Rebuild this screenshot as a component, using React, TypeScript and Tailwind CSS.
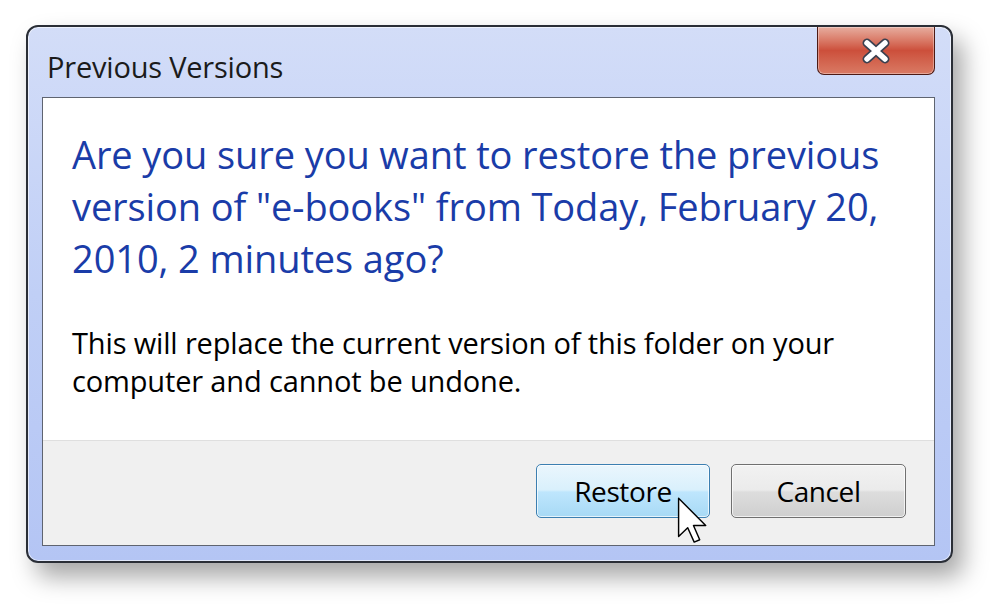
import React from "react";

const font = { fontFamily: '"Open Sans", "Noto Sans", sans-serif' };

function CloseGlyph() {
  return (
    <svg width="30" height="26" viewBox="0 0 30 26">
      <path d="M6 5 L24 21 M24 5 L6 21" stroke="#3b4150" strokeWidth="9" strokeLinecap="round" />
      <path d="M6 5 L24 21 M24 5 L6 21" stroke="#ffffff" strokeWidth="5.5" strokeLinecap="round" />
    </svg>
  );
}

function Cursor() {
  return (
    <svg width="32" height="48" viewBox="0 0 13 20" className="absolute left-[677px] top-[497px]">
      <path
        d="M0.5 0.5 L0.5 16.5 L4.3 12.8 L7 18.8 L9.3 17.8 L6.7 11.9 L11.8 11.9 Z"
        fill="#ffffff"
        stroke="#000000"
        strokeWidth="0.6"
        strokeLinejoin="round"
      />
    </svg>
  );
}

export default function App() {
  return (
    <div className="relative h-[609px] w-[1000px] overflow-hidden bg-white" style={font}>
      {/* Window */}
      <div className="ml-[26px] mt-[25px] flex h-[538px] w-[927px] flex-col rounded-[12px] border-2 border-[#2a2e36] bg-gradient-to-b from-[#d3ddf8] via-[#c0cff6] to-[#b4c5f4] shadow-[10px_14px_24px_rgba(0,0,0,0.35),inset_0_0_0_1px_rgba(255,255,255,0.6)]">
        {/* Title bar */}
        <div className="flex h-[70px] items-start justify-between pl-[19px] pr-[16px]">
          <div className="mt-[18px] text-[29px] tracking-[-0.2px] text-[#1b1b1b]">Previous Versions</div>
          <div className="flex h-[48px] w-[118px] items-center justify-center rounded-b-[7px] border border-t-0 border-[#4d1a14] bg-gradient-to-b from-[#e6ad9f] via-[#cc4f3b] to-[#d97a64] shadow-[inset_0_0_0_1px_rgba(255,255,255,0.35)]">
            <CloseGlyph />
          </div>
        </div>

        {/* Content */}
        <div className="mb-[15px] ml-[14px] mr-[16px] flex flex-1 flex-col border border-[#5f6470] bg-white">
          <div className="flex-1 pl-[29px] pt-[30px]">
            <div className="text-[38px] leading-[52px] tracking-[-0.1px] text-[#1a3ca8]">
              Are you sure you want to restore the previous
              <br />
              version of "e-books" from Today, February 20,
              <br />
              2010, 2 minutes ago?
            </div>
            <div className="mt-[40px] text-[29px] leading-[38px] tracking-[-0.15px] text-black">
              This will replace the current version of this folder on your
              <br />
              computer and cannot be undone.
            </div>
          </div>
          <div className="flex h-[105px] items-start justify-end gap-[21px] border-t border-[#dfdfdf] bg-[#f0f0f0] pr-[28px] pt-[23px]">
            <button className="h-[54px] w-[174px] rounded-[5px] border border-[#3c7fb1] bg-[linear-gradient(to_bottom,#eaf6fd_0%,#d9f0fc_48%,#bee6fd_52%,#a7d9f5_100%)] text-[28px] tracking-[-0.4px] text-black shadow-[inset_0_0_0_1px_rgba(255,255,255,0.7)]">
              Restore
            </button>
            <button className="h-[54px] w-[175px] rounded-[5px] border border-[#707070] bg-[linear-gradient(to_bottom,#f2f2f2_0%,#ebebeb_48%,#dddddd_52%,#cfcfcf_100%)] text-[28px] tracking-[-0.4px] text-black shadow-[inset_0_0_0_1px_rgba(255,255,255,0.7)]">
              Cancel
            </button>
          </div>
        </div>
      </div>
      <Cursor />
    </div>
  );
}
